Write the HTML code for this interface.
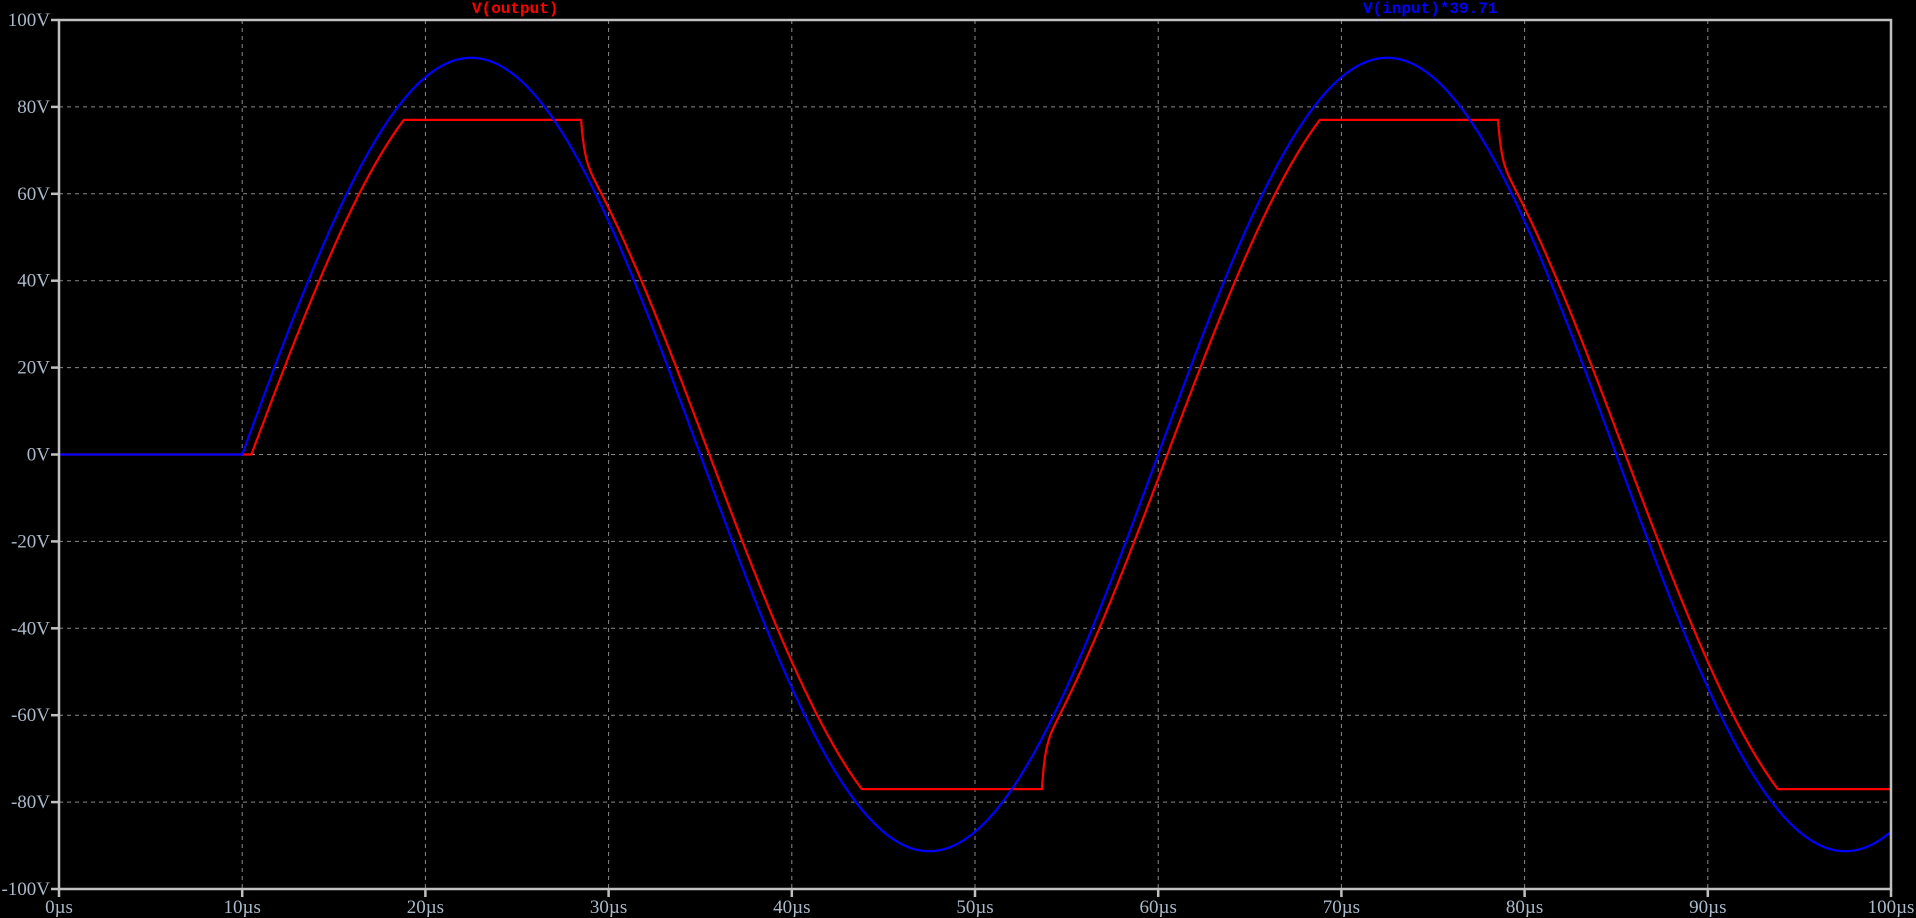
<!DOCTYPE html>
<html><head><meta charset="utf-8"><style>
html,body{margin:0;padding:0;background:#000;width:1916px;height:918px;overflow:hidden}
svg{display:block}
text{font-family:"Liberation Serif",serif;font-size:19px}
text.t{font-family:"Liberation Mono",monospace;font-size:16px}
</style></head><body>
<svg id="s" width="1916" height="918" xmlns="http://www.w3.org/2000/svg">
<rect width="1916" height="918" fill="#000"/>
<g id="grid" stroke="#8a8a8a" stroke-width="1" stroke-dasharray="4,4"></g>
<g id="lbl" fill="#aab9c9"></g>
<path id="red" fill="none" stroke="#ff0000" stroke-width="2.2"/>
<path id="blue" fill="none" stroke="#0000ff" stroke-width="2.2"/>
<rect x="59" y="20" width="1832" height="869" fill="none" stroke="#c0c0c0" stroke-width="2.5"/>
<g id="ticks" stroke="#c0c0c0" stroke-width="2.5"></g>
<text class="t" x="472" y="13" fill="#ff0000" font-weight="bold">V(output)</text>
<text class="t" x="1363" y="13" fill="#0000ff" font-weight="bold">V(input)*39.71</text>
</svg>
<script>
var L=59,R=1891,T=20,B=889;
function X(t){return L+(t/100)*(R-L);}
function Y(v){return T+(100-v)/200*(B-T);}
var g=document.getElementById('grid'),lb=document.getElementById('lbl'),tk=document.getElementById('ticks'),ns="http://www.w3.org/2000/svg";
function el(p,n,a,txt){var e=document.createElementNS(ns,n);for(var k in a)e.setAttribute(k,a[k]);if(txt)e.textContent=txt;p.appendChild(e);}
for(var i=0;i<=10;i++){var x=X(i*10);if(i>0&&i<10)el(g,'line',{x1:x,y1:T,x2:x,y2:B});
el(tk,'line',{x1:x,y1:B,x2:x,y2:B+8});el(lb,'text',{x:x,y:913,'text-anchor':'middle'},(i*10)+'µs');}
for(var i=0;i<=10;i++){var v=100-i*20,y=Y(v);if(i>0&&i<10)el(g,'line',{x1:L,y1:y,x2:R,y2:y});
el(tk,'line',{x1:51,y1:y,x2:L,y2:y});el(lb,'text',{x:50,y:y+6,'text-anchor':'end'},v+'V');}
function blue(t){return t<10?0:91.3*Math.sin(2*Math.PI*(t-10)/50);}
function base(t){return t<10.5?0:89*Math.sin(2*Math.PI*(t-10.5)/50);}
var pb="",pr="",holdP=false,holdN=false,rel=-99,relv=0;
for(var t=0;t<=100.001;t+=0.05){
 var b=blue(t);pb+=(t==0?"M":"L")+X(t).toFixed(1)+" "+Y(b).toFixed(1);
 var r=base(t);
 if(r>=77)holdP=true; if(r<=-77)holdN=true;
 if(holdP&&((t>28.5&&t<30)||(t>78.5&&t<80))){holdP=false;rel=t;relv=77;}
 if(holdN&&(t>53.6&&t<55)){holdN=false;rel=t;relv=-77;}
 if(holdP)r=77; else if(holdN)r=-77;
 else if(t-rel<3){r=r+(relv-r)*Math.exp(-(t-rel)/0.15);}
 pr+=(t==0?"M":"L")+X(t).toFixed(1)+" "+Y(r).toFixed(1);
}
document.getElementById('blue').setAttribute('d',pb);
document.getElementById('red').setAttribute('d',pr);
</script>
</body></html>
